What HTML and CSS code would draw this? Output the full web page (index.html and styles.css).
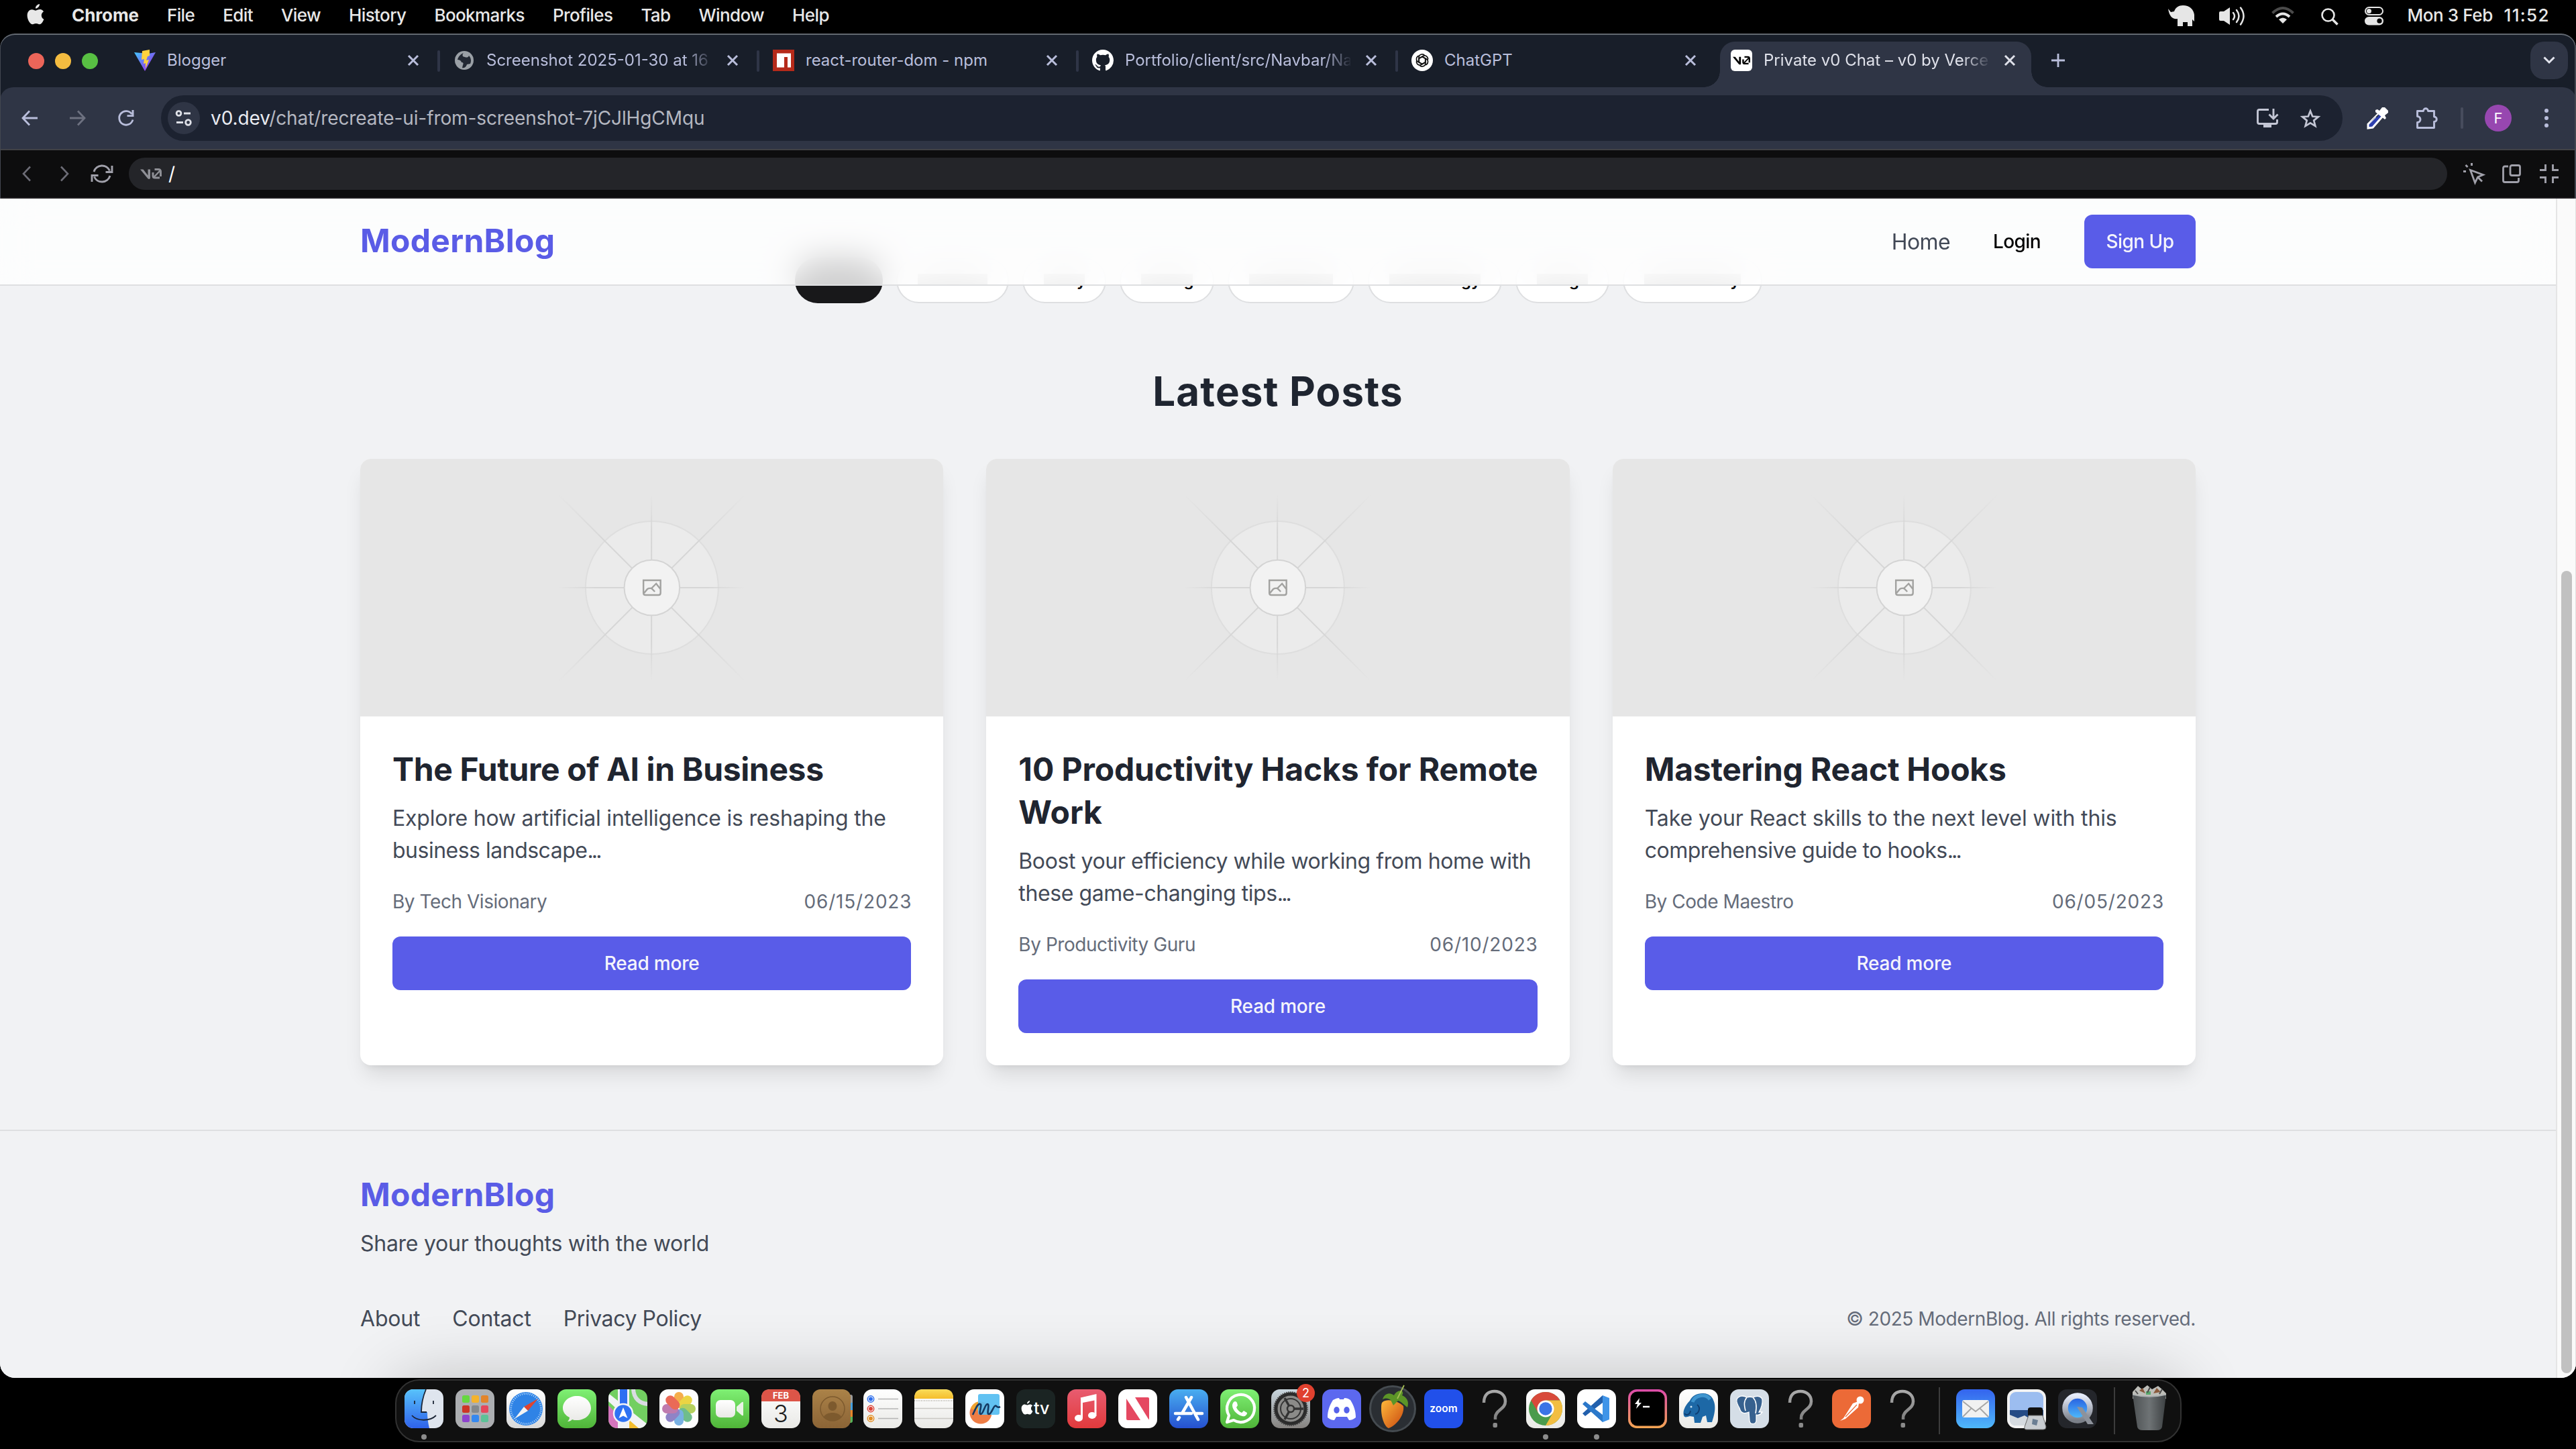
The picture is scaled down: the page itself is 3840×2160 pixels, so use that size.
FILE: index.html
```html
<!DOCTYPE html>
<html lang="en">
<head>
<meta charset="utf-8">
<title>ModernBlog</title>
<link rel="stylesheet" href="styles.css">
</head>
<body>
<svg class="defs" width="0" height="0" aria-hidden="true">
  <defs>
    <radialGradient id="fadeAxis" gradientUnits="userSpaceOnUse" cx="434" cy="192" r="140"><stop offset=".6" stop-color="#d6d6d6"/><stop offset="1" stop-color="#d6d6d6" stop-opacity="0"/></radialGradient>
    <radialGradient id="fadeDiag" gradientUnits="userSpaceOnUse" cx="434" cy="192" r="196"><stop offset=".5" stop-color="#d6d6d6"/><stop offset="1" stop-color="#d6d6d6" stop-opacity="0"/></radialGradient>
    <linearGradient id="gGreen" x1="0" y1="0" x2="0" y2="1"><stop stop-color="#7ff074"/><stop offset="1" stop-color="#4fb438"/></linearGradient>
    <linearGradient id="gWhite" x1="0" y1="0" x2="0" y2="1"><stop stop-color="#fff"/><stop offset="1" stop-color="#d9d9d9"/></linearGradient>
    <linearGradient id="gPale" x1="0" y1="0" x2="0" y2="1"><stop stop-color="#fff"/><stop offset="1" stop-color="#e9e9e6"/></linearGradient>
    <linearGradient id="gBlue" x1="0" y1="0" x2="0" y2="1"><stop stop-color="#49aef0"/><stop offset="1" stop-color="#2550d0"/></linearGradient>
    <linearGradient id="gFinder" x1="0" y1="0" x2="0" y2="1"><stop stop-color="#58c2fb"/><stop offset="1" stop-color="#2f62ea"/></linearGradient>
    <linearGradient id="gMusic" x1="0" y1="0" x2="0" y2="1"><stop stop-color="#e85c70"/><stop offset="1" stop-color="#e23a3c"/></linearGradient>
    <linearGradient id="gSettings" x1="0" y1="0" x2="0" y2="1"><stop stop-color="#c9d6de"/><stop offset="1" stop-color="#85827f"/></linearGradient>
    <linearGradient id="gTerm" x1="0" y1="0" x2="0" y2="1"><stop stop-color="#dd4bab"/><stop offset="1" stop-color="#f4a552"/></linearGradient>
    <linearGradient id="gMail" x1="0" y1="0" x2="0" y2="1"><stop stop-color="#3464ee"/><stop offset="1" stop-color="#4fb8fa"/></linearGradient>
    <linearGradient id="gQ" x1="0" y1="0" x2="0" y2="1"><stop stop-color="#a9a9a9"/><stop offset="1" stop-color="#7f7f7f"/></linearGradient>
    <linearGradient id="gNotes" x1="0" y1="0" x2="0" y2="1"><stop stop-color="#f9dc5a"/><stop offset="1" stop-color="#f5bd2c"/></linearGradient>
    <linearGradient id="gBrown" x1="0" y1="0" x2="0" y2="1"><stop stop-color="#ab8248"/><stop offset="1" stop-color="#8b6436"/></linearGradient>
    <linearGradient id="gBin" x1="0" y1="0" x2="1" y2="0"><stop stop-color="#4d5153"/><stop offset=".5" stop-color="#6e7375"/><stop offset="1" stop-color="#3c4042"/></linearGradient>
    <linearGradient id="gVite" x1="0" y1="0" x2="1" y2="1"><stop stop-color="#41c8ff"/><stop offset=".6" stop-color="#7c5cf0"/><stop offset="1" stop-color="#bd34fe"/></linearGradient>
    <linearGradient id="gFruit" x1="0" y1="0" x2="1" y2="1"><stop stop-color="#ffb93b"/><stop offset="1" stop-color="#c9480f"/></linearGradient>
    <linearGradient id="gQt" x1="0" y1="0" x2="0" y2="1"><stop stop-color="#e6ecfb"/><stop offset="1" stop-color="#7b8089"/></linearGradient>
    <linearGradient id="gLens" x1="0" y1="0" x2="0" y2="1"><stop stop-color="#2457dd"/><stop offset="1" stop-color="#52c4ff"/></linearGradient>
    <clipPath id="tile"><rect width="58" height="58" rx="13"/></clipPath>
    <symbol id="close" viewBox="0 0 18 18"><path d="M2 2l14 14M16 2L2 16" stroke="currentColor" stroke-width="3" fill="none"/></symbol>
    <symbol id="placeholder" viewBox="0 0 869 384">
      <circle cx="434.7" cy="192" r="99" fill="#ebebeb" stroke="#dedede" stroke-width="2"/>
      <path d="M434 54v276M296 192h276" stroke="url(#fadeAxis)" stroke-width="2"/>
      <path d="M295 53l279 279M574 53L295 332" stroke="url(#fadeDiag)" stroke-width="2"/>
      <circle cx="434.7" cy="192" r="41.3" fill="#f2f2f2" stroke="#d4d4d4" stroke-width="2"/>
      <path d="M422 181h25.500v19q0 3-3 3h-19.500q-3 0-3-3zM423 200l5-6q2-1.500 6-1l5 5M433 194l8-8 7 9" fill="none" stroke="#a2a2a0" stroke-width="2.400"/>
    </symbol>
    <symbol id="missing" viewBox="0 0 58 58"><path d="M13 20C13 8 20 3 29 3s16 6 16 15c0 12-15 13-15 24v3" fill="none" stroke="url(#gQ)" stroke-width="4.500"/><rect x="26.500" y="50" width="6.500" height="7" rx="2" fill="#8a8a8a"/></symbol>
    <symbol id="vzero" viewBox="0 0 32 16"><path d="M0 1.500h4.500l7 9v-9h3.500v12.500q0 2-1.800 2-1.200 0-2-1z" fill="currentColor"/><path d="M19 6v5q0 3 3 3h7M21.500 1.500H27q3.500 0 3.500 3.500v7" fill="none" stroke="currentColor" stroke-width="3"/><path d="M19.500 14L30 3" fill="none" stroke="currentColor" stroke-width="2.400"/></symbol>
    <symbol id="apple" viewBox="0 0 26 31"><path d="M19 0c.3 3-2.600 6.600-6 6.600C12.600 3.600 15.700.4 19 0zM25.400 22.700c-1.500 4-3.900 7.500-6.600 7.500-2 0-2.700-1.200-5.100-1.200s-3.200 1.200-5.100 1.200C4.500 30.200.6 22.500.6 16.900c0-5.600 3.500-8.700 7-8.700 2.300 0 4.200 1.500 5.600 1.500s3.600-1.600 6.300-1.600c1.100 0 3.900.3 5.500 3.100-4.700 2.800-3.900 9.500.4 11.500z" fill="currentColor"/></symbol>
  </defs>
</svg>

<header class="menubar">
  <nav class="menus">
    <svg class="apple" width="26" height="31"><use href="#apple"/></svg>
    <span class="menu app">Chrome</span><span class="menu">File</span><span class="menu">Edit</span><span class="menu">View</span><span class="menu">History</span><span class="menu">Bookmarks</span><span class="menu">Profiles</span><span class="menu">Tab</span><span class="menu">Window</span><span class="menu">Help</span>
  </nav>
  <div class="status">
    <svg class="s1" width="39" height="31" viewBox="0 0 39 31"><path d="M0 5l4 5 5-1c2-6 7-9 13-9 10 0 16 6 17 14v10l-3-3v10h-7v-6h-7v6h-8V20c-5 1-12-1-14-15z" fill="#e6e6e6"/></svg>
    <svg class="s2" width="40" height="28" viewBox="0 0 40 28"><path d="M0 9q0-2 2-2h5l9-6v26l-9-6H2q-2 0-2-2z" fill="#e6e6e6"/><path d="M21 9q4 5 0 10M26 5q7 9 0 18M32 1.500q9 12 0 25" fill="none" stroke="#e6e6e6" stroke-width="2.500" stroke-linecap="round"/></svg>
    <svg class="s3" width="34" height="26" viewBox="0 0 34 26"><path d="M1.500 9.500q15.500-15 31 0" fill="none" stroke="#4a4a4a" stroke-width="4"/><path d="M7 15q10-9 20 0" fill="none" stroke="#e6e6e6" stroke-width="4"/><path d="M11 19q6-5 12 0l-6 6z" fill="#e6e6e6"/></svg>
    <svg class="s4" width="26" height="26" viewBox="0 0 26 26"><circle cx="10.500" cy="10.500" r="9" fill="none" stroke="#e6e6e6" stroke-width="2.600"/><path d="M17 17l7.500 7.500" stroke="#e6e6e6" stroke-width="3.500"/></svg>
    <svg class="s5" width="28" height="28" viewBox="0 0 28 28"><rect x="1" y="1" width="26" height="11" rx="5.500" fill="none" stroke="#e6e6e6" stroke-width="2"/><circle cx="6.500" cy="6.500" r="3.500" fill="#e6e6e6"/><rect y="15" width="28" height="12.500" rx="6.200" fill="#e6e6e6"/><circle cx="22" cy="21.200" r="3.600" fill="#000"/></svg>
    <span class="date">Mon 3 Feb</span><span class="clock">11:52</span>
  </div>
</header>

<main class="window">
  <div class="tabstrip">
    <div class="lights"><i class="red"></i><i class="yellow"></i><i class="green"></i></div>
    <div class="tab"><svg class="fav" viewBox="0 0 32 32"><path d="M0 4l16 28L32 4l-11 2z" fill="url(#gVite)"/><path d="M23 0L12 2l-1 13 4-1-1 7 3-1v8l5-13-4 1 2-6 3-1z" fill="#ffd33d"/></svg><span class="title">Blogger</span><svg class="x"><use href="#close"/></svg></div>
    <div class="tab"><svg class="fav" viewBox="0 0 32 32"><circle cx="16" cy="16" r="14" fill="#9aa0a6"/><path d="M15 5c-5 2-8 6-9 10 3 0 5 1 6 4 3 0 3 2 2 4l-1 4c4 1 6-2 7-5l5-1c2-4 1-9-2-12-1 3-4 3-6 2-3 0-5-3-2-6z" fill="#222833"/></svg><span class="title fade">Screenshot 2025-01-30 at 16</span><svg class="x"><use href="#close"/></svg></div>
    <div class="tab"><svg class="fav" viewBox="0 0 32 32"><path d="M0 0h32v32H0z" fill="#b52a1a"/><path d="M6 5.500h21v21h-5V11h-5v15.500H6z" fill="#fff"/></svg><span class="title">react-router-dom - npm</span><svg class="x"><use href="#close"/></svg></div>
    <div class="tab"><svg class="fav" viewBox="0 0 16 16"><path fill="#fff" d="M8 0C3.580 0 0 3.580 0 8c0 3.540 2.290 6.530 5.470 7.590.4.070.55-.17.55-.38 0-.19-.01-.82-.01-1.490-2.010.37-2.530-.49-2.690-.94-.09-.23-.48-.94-.82-1.130-.28-.15-.68-.52-.01-.53.63-.01 1.080.58 1.230.82.72 1.210 1.870.87 2.330.66.070-.52.28-.87.51-1.070-1.780-.2-3.640-.89-3.640-3.950 0-.87.31-1.590.82-2.150-.08-.2-.36-1.020.08-2.120 0 0 .67-.21 2.200.82.64-.18 1.320-.27 2-.27s1.360.09 2 .27c1.530-1.040 2.200-.82 2.200-.82.44 1.100.16 1.920.08 2.120.51.56.82 1.270.82 2.150 0 3.070-1.870 3.750-3.650 3.950.29.25.54.73.54 1.480 0 1.070-.01 1.930-.01 2.200 0 .21.15.46.55.38A8.010 8.010 0 0016 8c0-4.420-3.580-8-8-8z"/></svg><span class="title fade">Portfolio/client/src/Navbar/Na</span><svg class="x"><use href="#close"/></svg></div>
    <div class="tab last"><svg class="fav" viewBox="0 0 32 32"><circle cx="16" cy="16" r="16" fill="#fff"/><g fill="none" stroke="#111" stroke-width="1.700"><path id="petal" d="M16 10.500l5 3v6.500q0 4-4 5-3 .5-4.500-1.500"/><use href="#petal" transform="rotate(60 16 16)"/><use href="#petal" transform="rotate(120 16 16)"/><use href="#petal" transform="rotate(180 16 16)"/><use href="#petal" transform="rotate(240 16 16)"/><use href="#petal" transform="rotate(300 16 16)"/></g></svg><span class="title">ChatGPT</span><svg class="x"><use href="#close"/></svg></div>
    <div class="tab active"><svg class="fav" viewBox="0 0 32 32"><rect width="32" height="32" rx="6" fill="#fff"/><svg x="3" y="9.500" width="26" height="13" color="#000"><use href="#vzero"/></svg></svg><span class="title fade">Private v0 Chat – v0 by Verce</span><svg class="x"><use href="#close"/></svg></div>
    <svg class="plus" width="22" height="22" viewBox="0 0 22 22"><path d="M11 1v20M1 11h20" stroke="#b9bedb" stroke-width="2.800"/></svg>
    <div class="dropdown"><svg width="18" height="12" viewBox="0 0 18 12"><path d="M1.500 1.500L9 9l7.500-7.500" fill="none" stroke="#e3e5ee" stroke-width="3"/></svg></div>
  </div>

  <div class="toolbar">
    <svg class="back" width="24" height="24" viewBox="0 0 24 24"><path d="M24 12H2.500M12 1.500L2 12l10 10.500" fill="none" stroke="#b9bedb" stroke-width="2.800"/></svg>
    <svg class="fwd" width="24" height="24" viewBox="0 0 24 24"><path d="M0 12h21.500M12 1.500L22 12 12 22.500" fill="none" stroke="#6d7180" stroke-width="2.800"/></svg>
    <svg class="reload" width="24" height="24" viewBox="0 0 24 24"><path d="M22 14.500A10.300 10.300 0 1 1 20.500 6" fill="none" stroke="#b9bedb" stroke-width="2.800"/><path d="M23.500 0v10h-10V7.200h7V0z" fill="#b9bedb"/></svg>
    <div class="omnibox">
      <span class="site"><svg width="26" height="24" viewBox="0 0 26 24"><g fill="none" stroke="#dfe1e8" stroke-width="2.800"><circle cx="5.500" cy="5" r="3.400"/><path d="M13 5h10M2 18.500h10"/><circle cx="19.500" cy="18.500" r="3.800"/></g></svg></span>
      <span class="url"><b>v0.dev</b>/chat/recreate-ui-from-screenshot-7jCJlHgCMqu</span>
      <svg class="install" width="32" height="28" viewBox="0 0 32 28"><path d="M18 1.500H4Q1.500 1.500 1.500 4v16Q1.500 22.500 4 22.500h24q2.500 0 2.500-2.500v-4M25 0v14M18.500 8.500L25 15l6.500-6.500" fill="none" stroke="#c3c6d4" stroke-width="2.900"/><path d="M10 23h12v5H10z" fill="#c3c6d4"/></svg>
      <svg class="star" width="30" height="29" viewBox="0 0 30 29"><path d="M15 3.500l3.200 8 8.700.6-6.700 5.500 2.200 8.300-7.400-4.600-7.400 4.600 2.200-8.300-6.700-5.500 8.700-.6z" fill="none" stroke="#c3c6d4" stroke-width="2.700"/></svg>
    </div>
    <svg class="picker" width="32" height="32" viewBox="0 0 32 32"><path d="M19 8l5 5L9 30l-7 1 0-6z" fill="#2d3fae" stroke="#fff" stroke-width="3"/><path d="M3 24.500L11.500 15.500l5-1L19 9z" fill="#2f3547"/><path d="M13 4l3-1 3 2 4-5h4l5 5v3l-5 4 2 4-2 2L13 7z" fill="#fff"/></svg>
    <svg class="puzzle" width="32" height="32" viewBox="0 0 32 32"><path d="M2 5.500h8.500c0-5 7-5 7 0H26.500V14c5 0 5 7.500 0 7.500V30.500H1.500V22.500c6 0 6-9 0-9V5.500z" fill="none" stroke="#b9bedb" stroke-width="2.900" stroke-linejoin="round"/></svg>
    <i class="rule"></i>
    <span class="avatar">F</span>
    <svg class="dots" width="6" height="28" viewBox="0 0 6 28"><g fill="#b9bedb"><circle cx="3" cy="3" r="3"/><circle cx="3" cy="14" r="3"/><circle cx="3" cy="25" r="3"/></g></svg>
  </div>

  <div class="previewbar">
    <svg class="pv1" width="14" height="24" viewBox="0 0 14 24"><path d="M12 1.500L2 12l10 10.500" fill="none" stroke="#6c6c76" stroke-width="2.600"/></svg>
    <svg class="pv2" width="14" height="24" viewBox="0 0 14 24"><path d="M2 1.500L12 12 2 22.500" fill="none" stroke="#6c6c76" stroke-width="2.600"/></svg>
    <svg class="pv3" width="32" height="30" viewBox="0 0 32 30"><path d="M4 12A12.500 12.500 0 0 1 27.500 10.500M31 3v9.500H21.500M28 18A12.500 12.500 0 0 1 4.500 19.500M1 27V17.500h9.500" fill="none" stroke="#a0a0aa" stroke-width="2.900"/></svg>
    <div class="path"><svg class="mark" width="32" height="16"><use href="#vzero"/></svg><span>/</span></div>
    <svg class="pv4" width="32" height="32" viewBox="0 0 32 32"><path d="M10.500 10.500l19 7-8 3.500-4 8.500zM21 20.500l7 7" fill="none" stroke="#a0a0aa" stroke-width="2.800"/><path d="M11 0h3v4h-3zM0 11h4v3H0zM2.500 4L4.500 2l3 3-2 2z" fill="#a0a0aa"/></svg>
    <svg class="pv5" width="28" height="28" viewBox="0 0 28 28"><rect x="12" y="1.500" width="14.500" height="15" rx="2.500" fill="none" stroke="#a0a0aa" stroke-width="2.800"/><path d="M9 3H4Q1.500 3 1.500 5.500V24Q1.500 26.500 4 26.500h18q2.500 0 2.500-2.500v-4" fill="none" stroke="#a0a0aa" stroke-width="2.800"/></svg>
    <svg class="pv6" width="28" height="28" viewBox="0 0 28 28"><path d="M0 8.500h8.500V0M19.500 0v8.500H28M0 19.500h8.500V28M28 19.500h-8.500V28" fill="none" stroke="#a0a0aa" stroke-width="2.900"/></svg>
  </div>

  <div class="viewport">
    <div class="site-page">
      <header class="nav">
        <a class="logo">ModernBlog</a>
        <a class="home">Home</a><a class="login">Login</a><a class="signup">Sign Up</a>
      </header>

      <div class="filters">
        <span class="pill on p1"><b>Latest</b></span><span class="pill p2"><b>Business</b></span><span class="pill p3"><b>Study</b></span><span class="pill p4"><b>Coding</b></span><span class="pill p5"><b>Freelance</b></span><span class="pill p6"><b>Technology</b></span><span class="pill p7"><b>Design</b></span><span class="pill p8"><b>Productivity</b></span>
      </div>

      <h1>Latest Posts</h1>

      <section class="posts">
        <article class="card">
          <svg class="cover"><use href="#placeholder"/></svg>
          <div class="body">
            <h2 class="t1">The Future of AI in Business</h2>
            <p class="d1">Explore how artificial intelligence is reshaping the<br><span class="tight">business landscape</span><span class="dots3">...</span></p>
            <div class="meta"><span>By Tech Visionary</span><time>06/15/2023</time></div>
            <a class="btn">Read more</a>
          </div>
        </article>
        <article class="card">
          <svg class="cover"><use href="#placeholder"/></svg>
          <div class="body">
            <h2 class="t2">10 Productivity Hacks for Remote<br>Work</h2>
            <p class="d2">Boost your efficiency while working from home with<br>these game-changing tips<span class="dots3">...</span></p>
            <div class="meta"><span>By Productivity Guru</span><time>06/10/2023</time></div>
            <a class="btn">Read more</a>
          </div>
        </article>
        <article class="card">
          <svg class="cover"><use href="#placeholder"/></svg>
          <div class="body">
            <h2 class="t3">Mastering React Hooks</h2>
            <p class="d3">Take your React skills to the next level with this<br><span class="tight">comprehensive guide to hooks</span><span class="dots3">...</span></p>
            <div class="meta"><span>By Code Maestro</span><time>06/05/2023</time></div>
            <a class="btn">Read more</a>
          </div>
        </article>
      </section>

      <footer class="footer">
        <a class="logo">ModernBlog</a>
        <p class="tagline">Share your thoughts with the world</p>
        <div class="legal"><a>About</a><a>Contact</a><a class="policy">Privacy Policy</a><span class="copy">© 2025 ModernBlog. All rights reserved.</span></div>
      </footer>
    </div>
    <div class="scrollbar"><i class="thumb"></i></div>
  </div>
</main>

<div class="shelf">
  <div class="dock">
    <span class="app running"><svg viewBox="0 0 58 58"><g clip-path="url(#tile)"><path d="M0 0h58v58H0z" fill="#dfe5ee"/><path d="M32 0c-5 12-7 22-7 34h9c0 8 1 16 3 24H0V0z" fill="url(#gFinder)"/></g><path d="M15 17v5M43 17v5M11 39c8 9 27 9 36 0M32 0c-5 12-7 22-7 34h8" fill="none" stroke="#1b2536" stroke-width="1.800"/></svg></span>
    <span class="app"><svg viewBox="0 0 58 58"><rect width="58" height="58" rx="13" fill="#acaeb1"/><g><rect x="10" y="9" width="11" height="11" rx="2.500" fill="#66d83f"/><rect x="24" y="9" width="11" height="11" rx="2.500" fill="#f4b32c"/><rect x="38" y="9" width="11" height="11" rx="2.500" fill="#e3852a"/><rect x="10" y="24" width="11" height="11" rx="2.500" fill="#cd3626"/><rect x="24" y="24" width="11" height="11" rx="2.500" fill="#84898c"/><rect x="38" y="24" width="11" height="11" rx="2.500" fill="#e5485c"/><rect x="10" y="38" width="11" height="11" rx="2.500" fill="#8d42cd"/><rect x="24" y="38" width="11" height="11" rx="2.500" fill="#3588ef"/><rect x="38" y="38" width="11" height="11" rx="2.500" fill="#5cc197"/></g></svg></span>
    <span class="app"><svg viewBox="0 0 58 58"><rect width="58" height="58" rx="13" fill="url(#gWhite)"/><circle cx="29" cy="29" r="25" fill="#2f83e6"/><circle cx="29" cy="29" r="22.500" fill="none" stroke="#b8dafa" stroke-width="3" stroke-dasharray="1 2"/><path d="M47 14L32 32l-6-6z" fill="#e0442f"/><path d="M12 44l14-18 6 6z" fill="#f4f4f4"/></svg></span>
    <span class="app"><svg viewBox="0 0 58 58"><rect width="58" height="58" rx="13" fill="url(#gGreen)"/><path d="M29 10c12 0 21 8 21 18s-9 18-21 18c-3 0-5 0-7-1-2 2-4 3-7 3 2-2 3-4 3-6C12 39 8 34 8 28c0-10 9-18 21-18z" fill="url(#gPale)"/></svg></span>
    <span class="app"><svg viewBox="0 0 58 58"><g clip-path="url(#tile)"><path d="M0 0h58v58H0z" fill="#72cf61"/><path d="M0 24l34 34H0z" fill="#d574bd"/><path d="M0 6l58 46v6H44L0 18z" fill="#f2f3f6"/><path d="M31 58V46l14 12z" fill="#f3bd2f"/><path d="M14 0h17v58H14z" fill="#eef0f4"/><path d="M17 0h11v30H17z" fill="#2e6ff2"/><path d="M37-2c0 16 10 24 24 24" fill="none" stroke="#dadce2" stroke-width="6"/><circle cx="22" cy="36" r="14" fill="#2e72f3" stroke="#f2f3f6" stroke-width="2.500"/><path d="M22 27l6.500 16-6.500-3.500L15.500 43z" fill="#fff"/></g></svg></span>
    <span class="app"><svg viewBox="0 0 58 58"><rect width="58" height="58" rx="13" fill="#fdfdfd"/><g opacity=".86"><rect x="22" y="4" width="14" height="24" rx="7" fill="#f4a12e"/><rect x="22" y="4" width="14" height="24" rx="7" fill="#e9ce25" transform="rotate(45 29 29)"/><rect x="22" y="4" width="14" height="24" rx="7" fill="#a9c944" transform="rotate(90 29 29)"/><rect x="22" y="4" width="14" height="24" rx="7" fill="#58b37a" transform="rotate(135 29 29)"/><rect x="22" y="4" width="14" height="24" rx="7" fill="#64a5df" transform="rotate(180 29 29)"/><rect x="22" y="4" width="14" height="24" rx="7" fill="#7d70bd" transform="rotate(225 29 29)"/><rect x="22" y="4" width="14" height="24" rx="7" fill="#b666a2" transform="rotate(270 29 29)"/><rect x="22" y="4" width="14" height="24" rx="7" fill="#e8523c" transform="rotate(315 29 29)"/></g></svg></span>
    <span class="app"><svg viewBox="0 0 58 58"><rect width="58" height="58" rx="13" fill="url(#gGreen)"/><rect x="8" y="16" width="29" height="26" rx="7" fill="url(#gPale)"/><path d="M39 26l8-7q2-1 2 1v18q0 2-2 1l-8-7z" fill="#e9f3e6"/></svg></span>
    <span class="app"><svg viewBox="0 0 58 58"><rect width="58" height="58" rx="13" fill="url(#gPale)"/><path d="M0 18v-5Q0 0 13 0h32q13 0 13 13v5z" fill="#dc5548"/><text x="29" y="14" class="cal-m">FEB</text><text x="29" y="49" class="cal-d">3</text></svg></span>
    <span class="app"><svg viewBox="0 0 58 58"><path d="M50 8h7q3 0 3 3v10H50z" fill="#9a9a9a"/><path d="M50 20h10v11H50z" fill="#45a0e0"/><path d="M50 31h10v10H50z" fill="#e9862b"/><path d="M50 41h10v6q0 3-3 3h-7z" fill="#56b55a"/><rect width="57" height="58" rx="12" fill="url(#gBrown)"/><g fill="none" stroke="#7d5a2e" stroke-width="1.500"><circle cx="30" cy="29" r="18"/></g><ellipse cx="30" cy="25" rx="6.500" ry="7" fill="#7d5a2e"/><path d="M17 41c4-8 22-8 26 0-7 8-19 8-26 0z" fill="#7d5a2e"/></svg></span>
    <span class="app"><svg viewBox="0 0 58 58"><rect width="58" height="58" rx="13" fill="url(#gPale)"/><path d="M22 14.500h30M22 29h30M22 43.500h30" stroke="#b5b5b5" stroke-width="1.500"/><g stroke-width="1.500" fill="#fff"><circle cx="11" cy="14.500" r="4.700" stroke="#2f6fec"/><circle cx="11" cy="29" r="4.700" stroke="#dc4438"/><circle cx="11" cy="43.500" r="4.700" stroke="#e08c22"/></g><circle cx="11" cy="14.500" r="3" fill="#2f6fec"/><circle cx="11" cy="29" r="3" fill="#dc4438"/><circle cx="11" cy="43.500" r="3" fill="#e08c22"/></svg></span>
    <span class="app"><svg viewBox="0 0 58 58"><rect width="58" height="58" rx="13" fill="url(#gPale)"/><path d="M0 14v-1Q0 0 13 0h32q13 0 13 13v1z" fill="url(#gNotes)"/><path d="M0 17h58" stroke="#a9a69c" stroke-width="1.500" stroke-dasharray="1 1.500"/><path d="M0 28.500h58M0 43.500h58" stroke="#c9c8c4" stroke-width="1.300"/></svg></span>
    <span class="app"><svg viewBox="0 0 58 58"><rect width="58" height="58" rx="13" fill="#fff"/><circle cx="23" cy="35" r="16.500" fill="#ee7d45"/><path d="M8 29a16.500 16.500 0 0 1 12-11v14z" fill="#f0a531"/><rect x="19" y="7" width="32" height="31" rx="3" fill="#55bdf1" opacity=".92"/><path d="M11 38c4-8 7-17 11-16 4 0-3 15 1 15s6-15 10-15-2 15 2 15 6-10 9-12 2 4 8 1" fill="none" stroke="#143a63" stroke-width="2.600"/></svg></span>
    <span class="app"><svg viewBox="0 0 58 58"><rect width="58" height="58" rx="13" fill="#1b2423"/><svg x="7" y="17" width="18" height="21" color="#fff"><use href="#apple"/></svg><text x="26" y="37" class="tv">tv</text></svg></span>
    <span class="app"><svg viewBox="0 0 58 58"><rect width="58" height="58" rx="13" fill="url(#gMusic)"/><path d="M20 14l22-5v31" fill="none" stroke="#fff" stroke-width="3"/><path d="M20 13l23-5v8l-20 4v23h-3z" fill="#fff"/><ellipse cx="17" cy="43" rx="6" ry="5" fill="#fff"/><ellipse cx="37" cy="39" rx="6" ry="5" fill="#fff"/></svg></span>
    <span class="app"><svg viewBox="0 0 58 58"><rect width="58" height="58" rx="13" fill="#fff"/><rect x="12" y="12" width="34" height="34" rx="2" fill="#e54861"/><path d="M12 12h13l21 34H33L12 14z" fill="#fff"/></svg></span>
    <span class="app"><svg viewBox="0 0 58 58"><rect width="58" height="58" rx="13" fill="url(#gBlue)"/><path d="M25 12l18 33M33 12L19 36M15 42l-2 3M9 36h24M40 36h9" fill="none" stroke="#fff" stroke-width="4.500" stroke-linecap="round"/></svg></span>
    <span class="app"><svg viewBox="0 0 58 58"><rect width="58" height="58" rx="13" fill="url(#gGreen)"/><path d="M10 49l3-10A20.500 20.500 0 1 1 20 46z" fill="none" stroke="#fff" stroke-width="4.200" stroke-linejoin="round"/><path d="M20 19c2-2 4-1 5 1l1 4-2 3c2 4 4 6 8 8l3-3 5 3c0 4-4 6-7 5-7-1-15-9-15-16 0-2 1-4 2-5z" fill="#fff"/></svg></span>
    <span class="app"><svg viewBox="0 0 58 58"><rect width="58" height="58" rx="13" fill="url(#gSettings)"/><circle cx="29" cy="29" r="22" fill="#8b8b89" stroke="#2b2b2b" stroke-width="5"/><circle cx="29" cy="29" r="24.500" fill="none" stroke="#3a3a3a" stroke-width="2.500" stroke-dasharray="1.500 1.500"/><circle cx="29" cy="29" r="15" fill="none" stroke="#353535" stroke-width="2"/><path d="M29 29h19M29 29L20 13M29 29l-9 16" stroke="#333" stroke-width="3.500"/><circle cx="29" cy="29" r="5" fill="#8b8b89" stroke="#333" stroke-width="2.500"/></svg><em class="badge">2</em></span>
    <span class="app"><svg viewBox="0 0 58 58"><rect width="58" height="58" rx="13" fill="#5c68ef"/><path d="M16 16c4-2 6-3 9-3l1 2h6l1-2c4 0 6 1 9 3 5 8 8 16 8 26-4 3-7 4-10 4l-3-5H21l-3 5c-3 0-6-1-10-4 0-10 3-18 8-26z" fill="#fff"/><ellipse cx="21.500" cy="31" rx="4.200" ry="5" fill="#5561ea"/><ellipse cx="36.500" cy="31" rx="4.200" ry="5" fill="#5561ea"/></svg></span>
    <span class="app"><svg class="round" viewBox="0 0 70 70"><circle cx="35" cy="35" r="33.500" fill="#2a2e33" stroke="#454b50" stroke-width="3"/><path d="M20 25c7-6 24-1 31 6 2 12-9 28-22 33-6-2-11-16-11-28 0-6 0-9 2-11z" fill="url(#gFruit)"/><path d="M37 15c-8-6-15-1-17 6 6-3 9-1 12 1l4 8 7-7c4 1 8 5 14 10 3-9-1-15-8-18 3-4 0-7-2-7-4 0-8 3-10 7z" fill="#5c9527"/><path d="M42 20l10-20" stroke="#a6bf55" stroke-width="1.800"/></svg></span>
    <span class="app"><svg viewBox="0 0 58 58"><rect width="58" height="58" rx="13" fill="#2150ea"/><text x="29" y="34" class="zoom">zoom</text></svg></span>
    <span class="app"><svg><use href="#missing"/></svg></span>
    <span class="app running"><svg viewBox="0 0 58 58"><rect width="58" height="58" rx="13" fill="url(#gPale)"/><circle cx="29" cy="29" r="25" fill="#4a9b4c"/><path d="M7.300 16.500A25 25 0 0 1 50.700 16.500H29L18.200 35.200z" fill="#d8493a"/><path d="M50.700 16.500A25 25 0 0 1 29 54l10.800-18.800L29 16.500z" fill="#f2be42"/><circle cx="29" cy="29" r="12.500" fill="#fff"/><circle cx="29" cy="29" r="9.700" fill="#3b74e6"/></svg></span>
    <span class="app running"><svg viewBox="0 0 58 58"><rect width="58" height="58" rx="13" fill="#fff"/><path d="M38 9l10 4v32l-10 4z" fill="#3f94e8"/><path d="M38 9v11L12 40l-4-4z" fill="#2260ad"/><path d="M38 49V38L12 18l-4 4z" fill="#2b78ca"/></svg></span>
    <span class="app"><svg viewBox="0 0 58 58"><rect width="58" height="58" rx="13" fill="url(#gTerm)"/><rect x="3.500" y="3.500" width="51" height="51" rx="10" fill="#000"/><path d="M17 13l-7 9h4l-2 7 8-9h-4z" fill="#fff"/><path d="M22 26h10" stroke="#fff" stroke-width="2.500"/></svg></span>
    <span class="app"><svg viewBox="0 0 58 58"><rect width="58" height="58" rx="13" fill="url(#gPale)"/><path d="M16 17C22 3 46 2 51 16c5 10 1 24-2 33h-7l-2-10-5 2-3 9h-9l-1-9-6-1c-4 1-8 3-9-1-2-6 2-15 9-22z" fill="#1d68a6"/><path d="M20 19c4-11 20-13 26-4" fill="none" stroke="#3f95cf" stroke-width="5"/><path d="M8 36c3 4 8 2 9-4M27 23c6 5 2 13-3 14" fill="none" stroke="#0f3f73" stroke-width="2"/><circle cx="18" cy="26" r="1.500" fill="#cfe6f5"/></svg></span>
    <span class="app"><svg viewBox="0 0 58 58"><rect width="58" height="58" rx="13" fill="#d5dee7"/><path d="M10 15c3-6 10-6 15-3 3-1 6-1 9 0 6-3 12-2 14 3 1 8-2 14-5 19h5c-3 4-6 5-9 4v9c-1 6-9 6-10 0l-1-13c-7 3-12 2-14-6-3-5-5-9-4-13z" fill="#37618f" stroke="#fff" stroke-width="1.300"/><path d="M25 12c-5 6-4 12-2 20M34 12c6 6 6 14 4 24" fill="none" stroke="#fff" stroke-width="1.600"/></svg></span>
    <span class="app"><svg><use href="#missing"/></svg></span>
    <span class="app"><svg viewBox="0 0 58 58"><rect width="58" height="58" rx="13" fill="#ec6a37"/><circle cx="42" cy="16" r="5.500" fill="#fff"/><path d="M39 18l-8 3-14 22-5 4 8-3 19-17 1-6z" fill="#fff"/><path d="M20 41l17-18" stroke="#ec6a37" stroke-width="1.200"/></svg></span>
    <span class="app"><svg><use href="#missing"/></svg></span>
    <i class="sep"></i>
    <span class="app"><svg viewBox="0 0 58 58"><rect width="58" height="58" rx="13" fill="url(#gMail)"/><rect x="9" y="16" width="40" height="26" rx="3" fill="#f1f1f1"/><path d="M10 18l19 15 19-15M10 41l13-13M48 41L35 28" fill="none" stroke="#a5a5a5" stroke-width="1.800"/></svg></span>
    <span class="app"><svg class="wide" viewBox="0 0 62 62"><rect width="58" height="58" rx="13" fill="#f2f2f2"/><rect x="4" y="4" width="50" height="50" rx="9" fill="#9cbdf0"/><path d="M4 31h50v14H4z" fill="#254b85"/><path d="M4 38l12 5 10-4 8 5 20-3v4q0 9-9 9H13q-9 0-9-9z" fill="#d6dbe0"/><path d="M31 30q0-3 4-3h14q4 0 4 3v9H31z" fill="#111"/><path d="M32 39h21l5 17q0 4-4 4H29q-4 0-3-4z" fill="#c9cdd1" stroke="#6a6a6a"/><path d="M38 44l8 2-2 8-7-2z" fill="#6b7e93"/></svg></span>
    <span class="app"><svg viewBox="0 0 58 58"><rect width="58" height="58" rx="13" fill="#24262b"/><circle cx="29" cy="28" r="18.500" fill="url(#gLens)" stroke="url(#gQt)" stroke-width="8.500"/><path d="M28 26l8 1 17 25h-9z" fill="#8d929b"/></svg></span>
    <i class="sep"></i>
    <span class="app trash"><svg viewBox="0 0 54 68"><path d="M2 10l8-9 6 5 8-6 7 6 9-5 6 5 6 6v8H2z" fill="#bdbdb8"/><path d="M12 8l5-4 4 8zM33 12l5-8 6 6z" fill="#8a5a3c"/><path d="M22 9h7v5h-7z" fill="#58a86b"/><path d="M6 8l4 5M28 3l-4 8M46 6l-4 7" stroke="#4b4b4b" stroke-width="2"/><path d="M2 14q25 6 50 0l-6 48q-1 5-8 5H17q-7 0-8-5z" fill="url(#gBin)"/><path d="M2 14q25 6 50 0" fill="none" stroke="#a9aeb0" stroke-width="1.500"/></svg></span>
  </div>
</div>
</body>
</html>
```
FILE: styles.css
```css
* { box-sizing: border-box; margin: 0; padding: 0; }
body {
  width: 3840px; height: 2160px; overflow: hidden; background: #000;
  font-family: Inter, "Liberation Sans", sans-serif; color: #1e2431;
  display: flex; flex-direction: column;
}
svg { display: block; flex: none; overflow: visible; }
.defs { position: absolute; }
i, em { font-style: normal; }

/* system menu bar */
.menubar {
  height: 50px; flex: none; display: flex; justify-content: space-between;
  color: #e8e8e8; font-size: 26px; font-weight: 500; line-height: 46px; white-space: nowrap;
}
.menus { display: flex; gap: 42px; padding-left: 40px; letter-spacing: -.6px; }
.apple { margin-top: 6px; margin-right: -1px; }
.menu.app { font-weight: 700; letter-spacing: -.1px; }
.status { display: flex; padding-right: 38px; }
.s1 { margin: 8px 37px 0 0; }
.s2 { margin: 10px 38px 0 0; }
.s3 { margin: 10px 40px 0 0; }
.s4 { margin: 12px 39px 0 0; }
.s5 { margin: 10px 35px 0 0; }
.date { width: 144px; letter-spacing: -.4px; }
.clock { letter-spacing: 1.400px; margin-right: 1px; }

/* browser window */
.window {
  position: relative; height: 2004px; flex: none; border-radius: 22px;
  overflow: hidden; background: #181e29; display: flex; flex-direction: column;
}
.window::after {
  content: ""; position: absolute; inset: 0 0 auto; height: 246px;
  border-radius: 22px 22px 0 0; pointer-events: none;
  box-shadow: inset 0 2px #636971, inset 1px 0 #434750, inset -2px 0 #434750;
}
.tabstrip { height: 80px; flex: none; display: flex; position: relative; padding-top: 12px; }
.lights { width: 178px; padding: 17px 0 0 42px; display: flex; gap: 16px; }
.lights i { width: 24px; height: 24px; border-radius: 50%; }
.red { background: #ec6559; }
.yellow { background: #f4bc40; }
.green { background: #58c043; }
.tab {
  width: 476px; height: 68px; padding: 12px 0 0 22px; display: flex; position: relative;
  color: #b9bedb; font-size: 24px;
}
.tab:not(.active):not(.last)::after {
  content: ""; width: 4px; height: 32px; background: #2f3547; border-radius: 2px;
  position: absolute; right: -2px; top: 13px;
}
.fav { width: 32px; height: 32px; margin-right: 17px; position: relative; }
.title { width: 336px; line-height: 32px; white-space: nowrap; position: relative; }
.fade { -webkit-mask-image: linear-gradient(90deg, #000 88%, transparent 101%); mask-image: linear-gradient(90deg, #000 88%, transparent 101%); }
.x { width: 18px; height: 18px; margin: 7px 0 0 22px; position: relative; }
.active { color: #dfe1ea; }
.active::before {
  content: ""; position: absolute; left: 6px; right: 6px; top: 0; bottom: 0;
  background: #2f3545; border-radius: 22px 22px 0 0;
}
.active::after {
  content: ""; position: absolute; left: -18px; right: -18px; bottom: 0; height: 24px;
  background:
    radial-gradient(circle at 0 0, transparent 23.500px, #2f3545 24px) left / 24px 24px no-repeat,
    radial-gradient(circle at 100% 0, transparent 23.500px, #2f3545 24px) right / 24px 24px no-repeat;
}
.plus { margin: 17px 0 0 23px; }
.dropdown {
  width: 56px; height: 56px; margin: 0 12px 0 auto; border-radius: 20px; background: #2f3545;
  display: flex; align-items: center; justify-content: center;
}
.toolbar {
  height: 94px; flex: none; background: #2f3545; border-radius: 20px 20px 0 0;
  border-bottom: 2px solid #414246; display: flex; align-items: center; padding-left: 32px;
}
.fwd { margin-left: 48px; }
.reload { margin-left: 48px; }
.omnibox {
  margin-left: 40px; width: 3252px; height: 68px; border-radius: 34px; background: #1c2230;
  display: flex; align-items: center; padding: 0 33px 0 10px;
}
.site {
  width: 48px; height: 48px; border-radius: 50%; background: #2f3545;
  display: flex; align-items: center; justify-content: center;
}
.url { margin-left: 16px; font-size: 28px; letter-spacing: -.1px; color: #b4b7c0; flex: 1; line-height: 68px; }
.url b { font-weight: 400; color: #e8eaf0; }
.star { margin-left: 33px; }
.picker { margin-left: 36px; }
.puzzle { margin-left: 42px; }
.rule { width: 4px; height: 32px; border-radius: 2px; background: #474c5d; margin-left: 34px; }
.avatar {
  width: 40px; height: 40px; border-radius: 50%; background: #9747b0; color: #fff;
  font-size: 22px; line-height: 40px; text-align: center; margin-left: 32px;
}
.dots { margin-left: 49px; }
.previewbar {
  height: 72px; flex: none; background: #0d0d0e; border-bottom: 2px solid #1e1c1f;
  display: flex; align-items: center; padding-left: 33px;
}
.pv2 { margin-left: 42px; }
.pv3 { margin-left: 33px; }
.path {
  margin-left: 24px; width: 3456px; height: 48px; border-radius: 24px; background: #242529;
  display: flex; align-items: center; padding-left: 17px; color: #fff; font-size: 28px;
}
.path span { margin-left: 10px; }
.mark { color: #8f9096; }
.pv4 { margin-left: 24px; }
.pv5 { margin-left: 26px; }
.pv6 { margin-left: 28px; }

/* page */
.viewport { flex: 1; display: flex; background: #fff; min-height: 0; }
.site-page { flex: 1; position: relative; overflow: hidden; background: #f1f2f4; }
.scrollbar { width: 30px; background: #fafafa; border-left: 2px solid #e5e5e5; border-right: 1px solid #e0e0e0; padding: 555px 0 0 6px; }
.thumb { display: block; width: 16px; height: 1196px; border-radius: 8px; background: #c1c1c1; }
.nav {
  position: absolute; left: 0; right: 0; top: 0; height: 130px; z-index: 2;
  background: rgba(255, 255, 255, .8); backdrop-filter: blur(24px);
  border-bottom: 2px solid #dedfe1; display: flex; align-items: center; padding: 0 537px;
}
.logo { font-size: 48px; line-height: 62px; padding-bottom: 2px; font-weight: 700; color: #5a5ce6; letter-spacing: .3px; }
.home { margin-left: auto; font-size: 32px; color: #414856; letter-spacing: -.6px; }
.login { margin-left: 64px; font-size: 28px; font-weight: 500; color: #000; letter-spacing: -.6px; }
.signup {
  margin-left: 65px; width: 166px; height: 80px; border-radius: 12px; background: #595ce8; color: #f4f4fb;
  font-size: 28px; font-weight: 500; letter-spacing: -.55px; line-height: 80px; text-align: center;
}
.filters { padding-top: 88px; padding-left: 1185px; display: flex; gap: 20px; }
.pill {
  position: relative; height: 68px; border: 2px solid #dedfe1; border-radius: 34px; background: #fff; color: #09090b;
  font-size: 24px; line-height: 64px; text-align: center;
}
/* only the part of a label below the sticky header stays sharp */
.pill b { display: block; font-weight: 600; clip-path: inset(40px 0 0 0); }
.pill::before {
  content: ""; position: absolute; left: 30px; right: 30px; top: 22px; height: 16px;
  background: rgba(0, 0, 0, .35);
}
.on::before { display: none; }
.on { background: #18181a; border-color: #18181a; color: #fafafa; }
.p1 { width: 131px; letter-spacing: -.7px; }
.p2 { width: 168px; }
.p3 { width: 125px; letter-spacing: -1px; }
.p4 { width: 141px; letter-spacing: -.8px; }
.p5 { width: 189px; letter-spacing: .6px; }
.p6 { width: 200px; }
.p7 { width: 140px; letter-spacing: -.6px; }
.p8 { width: 208px; }
h1 { margin: 95px 0 65px; font-size: 60px; line-height: 72px; font-weight: 700; text-align: center; letter-spacing: 1.150px; color: #1f2530; }
.posts { display: grid; grid-template-columns: repeat(3, 1fr); gap: 64px; padding: 0 537px; }
.card {
  background: #fff; border-radius: 16px; overflow: hidden; height: 904px;
  box-shadow: 0 20px 30px -6px rgba(0, 0, 0, .1), 0 8px 12px -8px rgba(0, 0, 0, .1);
}
.cover { width: 100%; height: 384px; background: #e6e6e6; }
.body { padding: 47px 48px 48px; }
h2 { font-size: 48px; line-height: 64px; font-weight: 700; color: #1f2530; white-space: nowrap; }
.t1 { letter-spacing: -.36px; }
.t2 { letter-spacing: -.12px; }
.t3 { letter-spacing: -.25px; }
.body p { margin: 17px 0 32px; font-size: 32px; line-height: 48px; color: #434a57; white-space: nowrap; }
.d1 { letter-spacing: -.21px; }
.d2 { letter-spacing: -.41px; }
.d3 { letter-spacing: -.13px; }
.tight { letter-spacing: -.5px; }
.dots3 { letter-spacing: -2.800px; }
.meta { display: flex; justify-content: space-between; font-size: 28px; line-height: 40px; color: #656c7a; letter-spacing: -.45px; }
.meta time { letter-spacing: .8px; margin-right: -1px; }
.btn {
  display: block; height: 80px; margin-top: 32px; border-radius: 12px; background: #595ce8; color: #f4f4fb;
  font-size: 28px; font-weight: 500; letter-spacing: -.2px; line-height: 80px; text-align: center;
}
.footer { margin-top: 96px; border-top: 2px solid #dedfe1; padding: 64px 537px; }
.footer .logo { display: block; }
.tagline { margin: 16px 0 64px; font-size: 32px; line-height: 48px; letter-spacing: -.27px; color: #434a57; }
.legal { display: flex; gap: 48px; font-size: 32px; line-height: 48px; letter-spacing: -.2px; color: #434a57; }
.policy { letter-spacing: -.41px; }
.copy { margin-left: auto; font-size: 28px; letter-spacing: -.42px; color: #656c7a; }

/* dock */
.shelf { flex: 1; padding: 2px 0 0 589px; }
.dock {
  position: relative; width: 2663px; height: 94px; border-radius: 36px; background: #101010;
  border: 2px solid #323232; box-shadow: 0 4px 100px rgba(0, 0, 0, .24);
  display: flex; gap: 18px; padding: 13px 0 0 12px;
}
.app { position: relative; flex: none; }
.dock .app { width: 58px; height: 58px; }
.dock .app svg { width: 58px; height: 58px; }
.dock .app .round { width: 70px; height: 70px; margin: -6px; }
.dock .app .wide { width: 62px; height: 62px; }
.dock .app svg svg { width: 18px; height: 21px; }
.running::after {
  content: ""; position: absolute; left: 25px; bottom: -17px; width: 8px; height: 8px;
  border-radius: 50%; background: #8c8c8c;
}
.sep { width: 2px; height: 70px; margin: -3px 6px 0 7px; background: #3c3c3c; }
.dock .trash, .dock .trash svg { width: 54px; height: 68px; }
.trash { margin-top: -6px; }
.badge {
  position: absolute; right: -7px; top: -8px; width: 27px; height: 27px; border-radius: 50%;
  background: #e0412f; color: #fff; font-size: 18px; line-height: 27px; text-align: center;
}
.cal-m { font-size: 13px; font-weight: 700; fill: #fff; text-anchor: middle; }
.cal-d { font-size: 36px; font-weight: 300; fill: #1d1d1d; text-anchor: middle; }
.tv { font-size: 25px; font-weight: 500; fill: #fff; }
.zoom { font-size: 15.500px; font-weight: 600; fill: #fff; text-anchor: middle; }
```
